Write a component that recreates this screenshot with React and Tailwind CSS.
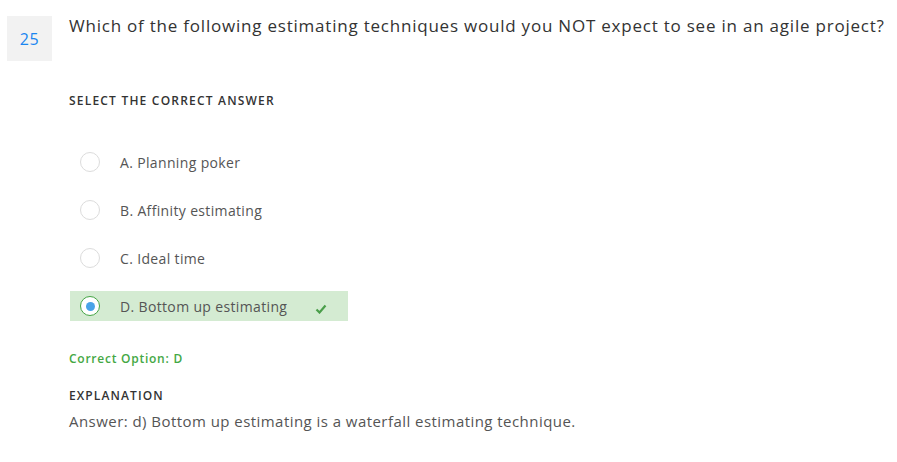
export default function App() {
  const font = { fontFamily: '"Open Sans", "Liberation Sans", sans-serif' };
  const options = [
    { label: "A. Planning poker" },
    { label: "B. Affinity estimating" },
    { label: "C. Ideal time" },
    { label: "D. Bottom up estimating", correct: true },
  ];
  return (
    <div className="w-[897px] h-[462px] bg-white relative" style={font}>
      <div className="flex items-start pt-[16px] pl-[7px]">
        <div className="w-[45px] h-[45px] bg-[#f2f2f2] flex items-center justify-center text-[16px] text-[#1a86f0] tracking-[0.5px]">
          25
        </div>
        <div className="ml-[17px] mt-[-1px] text-[17px] leading-[22px] text-[#333] tracking-[0.78px] whitespace-nowrap">
          Which of the following estimating techniques would you NOT expect to see in an agile project?
        </div>
      </div>
      <div className="pl-[69px] mt-[32px] text-[12px] font-semibold text-[#333] tracking-[1.2px] leading-[16px]">
        SELECT THE CORRECT ANSWER
      </div>
      <div className="pl-[70px] mt-[38px] flex flex-col gap-[18px]">
        {options.map((o) => (
          <div
            key={o.label}
            className={
              "w-[278px] h-[30px] flex items-center " +
              (o.correct ? "bg-[#d4ebd2]" : "")
            }
          >
            <div
              className={
                "ml-[10px] w-[20px] h-[20px] rounded-full bg-white flex items-center justify-center border " +
                (o.correct ? "border-[#45a545]" : "border-[#dcdcdc]")
              }
            >
              {o.correct && <div className="w-[9px] h-[9px] rounded-full bg-[#4aa3e8]" />}
            </div>
            <div className="ml-[20px] text-[14px] text-[#555] tracking-[0.35px]">{o.label}</div>
            {o.correct && (
              <svg className="ml-auto mr-[21px] mt-[6px]" width="12" height="10" viewBox="0 0 12 10">
                <path d="M1.5 5.5 L4.5 8.5 L10.5 1.5" fill="none" stroke="#4a9e4a" strokeWidth="2.2" />
              </svg>
            )}
          </div>
        ))}
      </div>
      <div className="pl-[69px] mt-[30px] text-[12px] font-semibold text-[#44a844] leading-[16px] tracking-[0.75px]">
        Correct Option: D
      </div>
      <div className="pl-[69px] mt-[21px] text-[12px] font-semibold text-[#333] leading-[16px] tracking-[1.1px]">
        EXPLANATION
      </div>
      <div className="pl-[69px] mt-[7px] text-[15px] text-[#555] leading-[20px] tracking-[0.45px]">
        Answer: d) Bottom up estimating is a waterfall estimating technique.
      </div>
    </div>
  );
}
